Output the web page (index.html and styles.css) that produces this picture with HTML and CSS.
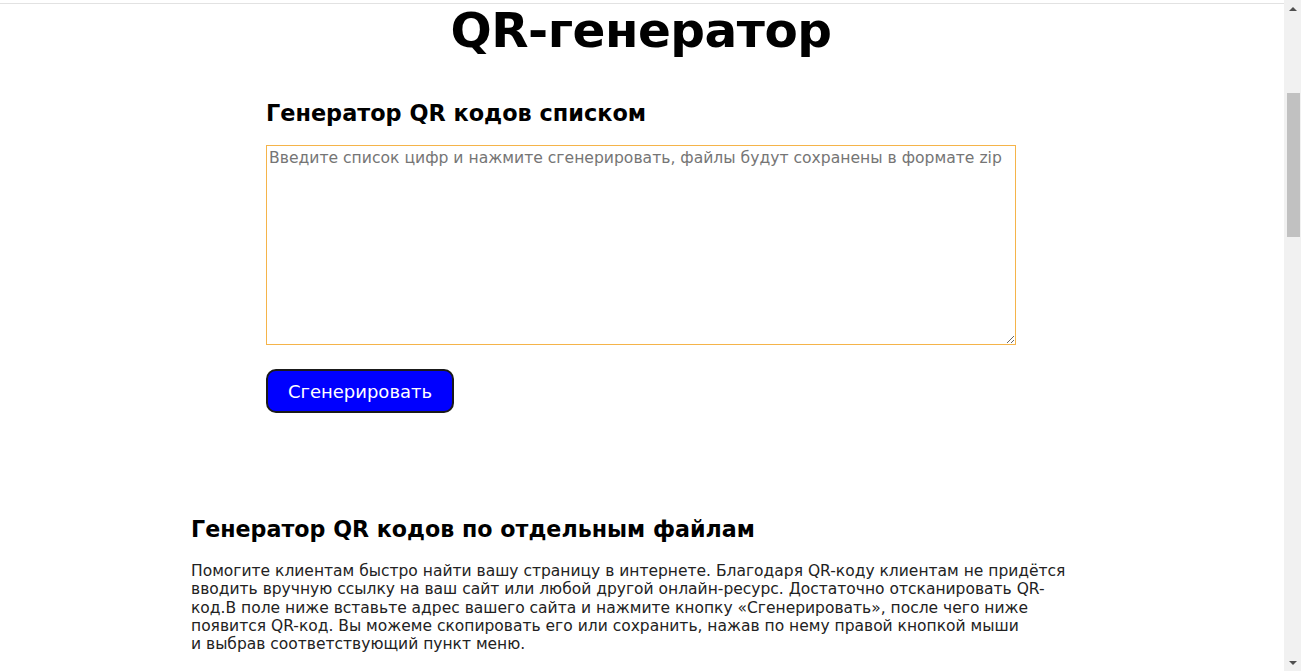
FILE: index.html
```html
<!DOCTYPE html>
<html lang="ru">
<head>
<meta charset="utf-8">
<title>QR-генератор</title>
<link rel="stylesheet" href="styles.css">
</head>
<body>
<div class="page">
  <main class="main">
    <div class="topbar"></div>
    <h1 class="title">QR-генератор</h1>
    <section class="list-gen">
      <h2 class="subtitle">Генератор QR кодов списком</h2>
      <textarea class="codes" placeholder="Введите список цифр и нажмите сгенерировать, файлы будут сохранены в формате zip"></textarea>
      <button class="btn" type="button">Сгенерировать</button>
    </section>
    <section class="file-gen">
      <h2 class="subtitle">Генератор QR кодов по отдельным файлам</h2>
      <p class="desc">Помогите клиентам быстро найти вашу страницу в интернете. Благодаря QR-коду клиентам не придётся<br>вводить вручную ссылку на ваш сайт или любой другой онлайн-ресурс. Достаточно отсканировать QR-<br>код.В поле ниже вставьте адрес вашего сайта и нажмите кнопку «Сгенерировать», после чего ниже<br>появится QR-код. Вы можеме скопировать его или сохранить, нажав по нему правой кнопкой мыши<br>и&nbsp;выбрав соответствующий пункт меню.</p>
    </section>
  </main>
  <div class="scrollbar">
    <div class="sb-arrow sb-up"></div>
    <div class="sb-track"><div class="sb-thumb"></div></div>
    <div class="sb-arrow sb-down"></div>
  </div>
</div>
</body>
</html>
```

FILE: styles.css
```css
html, body {
  margin: 0;
  padding: 0;
  height: 100%;
  overflow: hidden;
  background: #fff;
}
body {
  font-family: "DejaVu Sans", "Noto Sans", sans-serif;
  color: #000;
}
.page {
  display: flex;
  height: 671px;
}
.main {
  flex: 1;
  display: flex;
  flex-direction: column;
  min-width: 0;
  padding-right: 2px;
}
.topbar {
  height: 3px;
  border-bottom: 1px solid #e2e2e2;
  margin-right: -2px;
}
.title {
  margin: 0;
  text-align: center;
  font-size: 48.5px;
  line-height: 52px;
  font-weight: bold;
  letter-spacing: -0.5px;
}
.list-gen {
  width: 750px;
  margin: 43px auto 0;
  display: flex;
  flex-direction: column;
  align-items: flex-start;
}
.subtitle {
  margin: 0;
  font-size: 22.4px;
  line-height: 28px;
  font-weight: bold;
}
.codes {
  box-sizing: border-box;
  width: 750px;
  height: 200px;
  margin-top: 18px;
  padding: 3px 2px;
  border: 1px solid #f5b44a;
  outline: none;
  font-family: "DejaVu Sans", sans-serif;
  font-size: 15.6px;
  line-height: 18px;
  color: #333;
  resize: both;
}
.codes::placeholder {
  color: #757575;
}
.btn {
  margin-top: 24px;
  box-sizing: border-box;
  width: 188px;
  height: 44px;
  background: #0000ff;
  color: #fff;
  border: 2px solid #1a1a1a;
  border-radius: 10px;
  font-family: "DejaVu Sans", sans-serif;
  font-size: 18px;
  padding: 0;
}
.file-gen {
  width: 900px;
  margin: 101px auto 0;
}
.file-gen .subtitle {
  line-height: 30px;
  font-size: 22.2px;
}
.desc {
  margin: 18px 0 0;
  font-size: 15.5px;
  line-height: 18.3px;
  color: #222;
}
.scrollbar {
  width: 17px;
  flex: none;
  background: #f1f1f1;
  display: flex;
  flex-direction: column;
}
.sb-arrow {
  height: 17px;
  flex: none;
  display: flex;
  align-items: center;
  justify-content: center;
}
.sb-up::before {
  content: "";
  border-left: 4px solid transparent;
  border-right: 4px solid transparent;
  border-bottom: 4px solid #505050;
}
.sb-down::before {
  content: "";
  border-left: 4px solid transparent;
  border-right: 4px solid transparent;
  border-top: 4px solid #505050;
}
.sb-track {
  flex: 1;
  display: flex;
  justify-content: center;
}
.sb-thumb {
  width: 13px;
  height: 144px;
  margin-top: 76px;
  margin-left: 1px;
  background: #c1c1c1;
}
```
